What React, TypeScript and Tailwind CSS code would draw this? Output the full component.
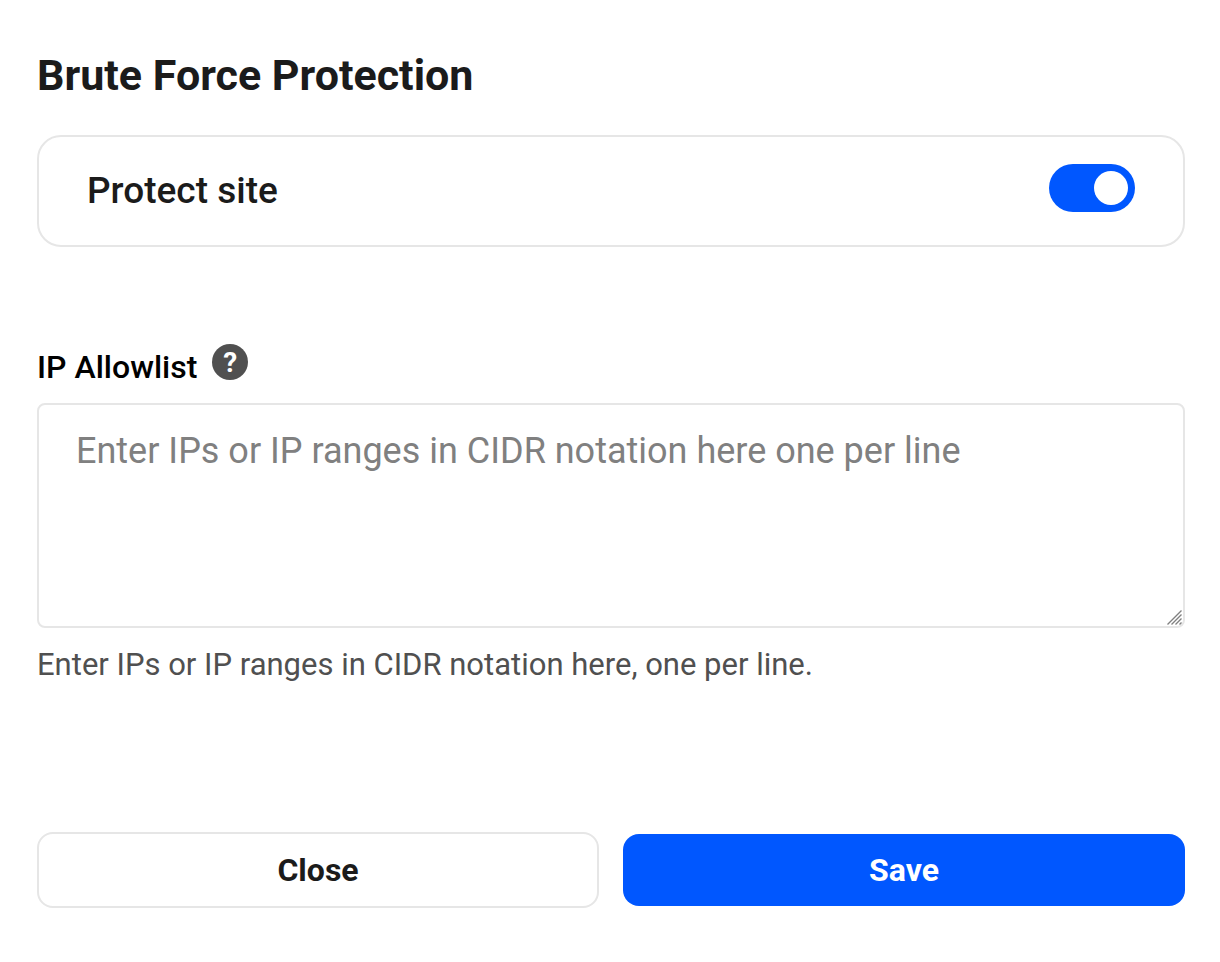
import React, { useState } from 'react';

interface ToggleProps {
  id: string;
  checked: boolean;
  onChange: (checked: boolean) => void;
}

const Toggle: React.FC<ToggleProps> = ({ id, checked, onChange }) => {
  return (
    <span className="relative inline-flex h-12 w-[86px] shrink-0">
      <input
        id={id}
        type="checkbox"
        role="switch"
        checked={checked}
        onChange={(e) => onChange(e.target.checked)}
        className="peer h-12 w-[86px] cursor-pointer appearance-none rounded-full bg-gray-300 checked:bg-[#0057ff]"
      />
      <span className="pointer-events-none absolute top-[7px] left-[7px] size-[34px] rounded-full bg-white peer-checked:left-[45px]" />
    </span>
  );
};

const HelpIcon: React.FC = () => {
  return (
    <button
      type="button"
      aria-label="About the IP allowlist"
      className="flex size-9 items-center justify-center rounded-full bg-[#505050] pt-px text-[28px] leading-none font-bold text-white"
    >
      ?
    </button>
  );
};

const ResizeGrip: React.FC = () => {
  return (
    <svg
      aria-hidden="true"
      viewBox="0 0 15 15"
      className="pointer-events-none absolute right-[3px] bottom-[3px] size-[15px]"
      stroke="#808080"
      strokeWidth="1.4"
    >
      <path d="M0.5 14.5L14.5 0.5M4.5 14.5L14.5 4.5M8.5 14.5L14.5 8.5M12.5 14.5L14.5 12.5" />
    </svg>
  );
};

const App: React.FC = () => {
  const [protect, setProtect] = useState(true);
  const [ips, setIps] = useState('');

  return (
    <form
      className="bg-white pt-[50px] pr-[35px] pb-[54px] pl-[37px] font-[Roboto,sans-serif] text-[#1b1b1b]"
      onSubmit={(e) => e.preventDefault()}
    >
      <h1 className="text-[43px] leading-[50px] font-bold">Brute Force Protection</h1>

      <div className="mt-[35px] flex h-28 items-center justify-between rounded-3xl border-2 border-[#e6e6e6] px-12 pb-[6px]">
        <label htmlFor="protect-site" className="pt-[6px] text-[37px] leading-10 font-medium">
          Protect site
        </label>
        <Toggle id="protect-site" checked={protect} onChange={setProtect} />
      </div>

      <div className="mt-[97px] flex items-start gap-[15px]">
        <label htmlFor="ip-allowlist" className="pt-[3px] text-[32px] leading-10 font-medium text-black">
          IP Allowlist
        </label>
        <HelpIcon />
      </div>
      <div className="relative mt-4">
        <textarea
          id="ip-allowlist"
          value={ips}
          onChange={(e) => setIps(e.target.value)}
          placeholder="Enter IPs or IP ranges in CIDR notation here one per line"
          className="block h-[225px] w-full resize-y rounded-lg border-2 border-[#e6e6e6] px-[37px] py-6 text-4xl leading-[44px] placeholder:text-[#808080] [&::-webkit-resizer]:bg-transparent"
        />
        <ResizeGrip />
      </div>
      <p className="mt-[17px] text-[31px] leading-10 text-[#505050]">
        Enter IPs or IP ranges in CIDR notation here, one per line.
      </p>

      <div className="mt-[147px] grid grid-cols-2 items-center gap-6">
        <button
          type="button"
          className="h-[76px] rounded-2xl border-2 border-[#e6e6e6] text-[32px] font-bold"
        >
          Close
        </button>
        <button
          type="submit"
          className="h-[72px] rounded-2xl bg-[#0057ff] text-[32px] font-bold text-white"
        >
          Save
        </button>
      </div>
    </form>
  );
};

export default App;
